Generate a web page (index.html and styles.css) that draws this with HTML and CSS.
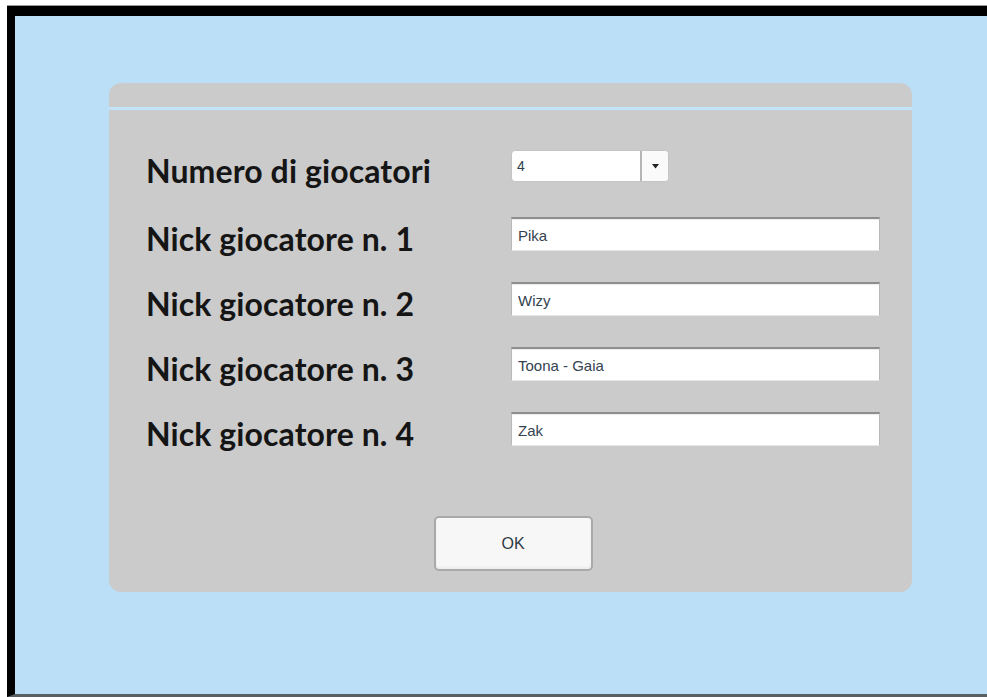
FILE: index.html
```html
<!DOCTYPE html>
<html lang="it">
<head>
<meta charset="utf-8">
<title>Giocatori</title>
<link rel="stylesheet" href="styles.css">
</head>
<body>
<div class="frame">
  <div class="panel">
    <div class="panel-head"></div>
    <form class="panel-body">
      <div class="row row-first">
        <label class="label" for="num">Numero di giocatori</label>
        <div class="select" id="num">
          <span class="select-value">4</span>
          <span class="select-arrow">
            <svg width="7" height="5" viewBox="0 0 7 5"><path d="M0 0H7L3.5 4.5Z" fill="#222"/></svg>
          </span>
        </div>
      </div>
      <div class="row">
        <label class="label">Nick giocatore n. 1</label>
        <input class="field" type="text" value="Pika">
      </div>
      <div class="row">
        <label class="label">Nick giocatore n. 2</label>
        <input class="field" type="text" value="Wizy">
      </div>
      <div class="row">
        <label class="label">Nick giocatore n. 3</label>
        <input class="field" type="text" value="Toona - Gaia">
      </div>
      <div class="row">
        <label class="label">Nick giocatore n. 4</label>
        <input class="field" type="text" value="Zak">
      </div>
      <div class="actions">
        <button class="btn" type="button">OK</button>
      </div>
    </form>
  </div>
</div>
</body>
</html>
```

FILE: styles.css
```css
html, body {
  margin: 0;
  padding: 0;
  background: #fff;
  height: 697px;
  overflow: hidden;
}

.frame {
  margin: 6px 0 0 7px;
  height: 691px;
  box-sizing: border-box;
  background: #bbdff7;
  border-top: 10px solid #000;
  border-left: 8px solid #000;
  border-bottom: 3px solid #5a5f63;
  padding: 67px 0 0 94px;
  position: relative;
}

/* thin grey rule above the black top edge */
.frame::before {
  content: "";
  position: absolute;
  top: -11px;
  left: -8px;
  right: 0;
  height: 1px;
  background: #9a9a9a;
}

.panel {
  width: 803px;
  height: 509px;
  background: #cbcbcb;
  border-radius: 12px;
  display: flex;
  flex-direction: column;
}

.panel-head {
  height: 24px;
  border-bottom: 3px solid #c2e3f8;
}

.panel-body {
  flex: 1;
  margin: 0;
  padding: 39px 0 0 37px;
  display: flex;
  flex-direction: column;
  gap: 31px;
}

.row {
  display: grid;
  grid-template-columns: 365px 369px;
  align-items: center;
  height: 34px;
}

.row-first {
  height: 33px;
  margin-bottom: 4px;
}

.label {
  font-family: "Lato", "Open Sans", sans-serif;
  font-weight: 700;
  font-size: 32px;
  line-height: 34px;
  margin: 5px 0 -5px;
  color: #151515;
  letter-spacing: 0.1px;
  white-space: nowrap;
}

.select {
  width: 158px;
  height: 32px;
  box-sizing: border-box;
  display: flex;
  background: #fff;
  border: 1px solid #c4c4c4;
  border-radius: 4px;
  font-family: "Liberation Sans", Arial, sans-serif;
  font-size: 14px;
  color: #2f3f4a;
}

.select-value {
  flex: 1;
  padding-left: 5px;
  display: flex;
  align-items: center;
}

.select-arrow {
  width: 26px;
  border-left: 2px solid #b5b5b5;
  display: flex;
  align-items: center;
  justify-content: center;
  background: #fafafa;
  border-radius: 0 4px 4px 0;
}

.field {
  width: 369px;
  height: 34px;
  box-sizing: border-box;
  margin: 0;
  padding: 2px 6px 0;
  background: #fff;
  border: 1px solid #b9b9b9;
  border-top: 2px solid #8e8e8e;
  border-bottom: 1px solid #e6e6e6;
  box-shadow: inset 0 1px 1px rgba(0, 0, 0, 0.08);
  font-family: "Liberation Sans", Arial, sans-serif;
  font-size: 15px;
  color: #34434f;
  outline: none;
}

.actions {
  display: flex;
  justify-content: center;
  padding: 39px 0 0 5px;
  margin-left: -37px;
}

.btn {
  width: 159px;
  height: 55px;
  background: #f7f7f7;
  border: 2px solid #a9a9a9;
  border-radius: 5px;
  box-shadow: inset 0 -2px 3px rgba(0, 0, 0, 0.05);
  font-family: "Liberation Sans", Arial, sans-serif;
  font-size: 16px;
  color: #2e3a43;
}
```
